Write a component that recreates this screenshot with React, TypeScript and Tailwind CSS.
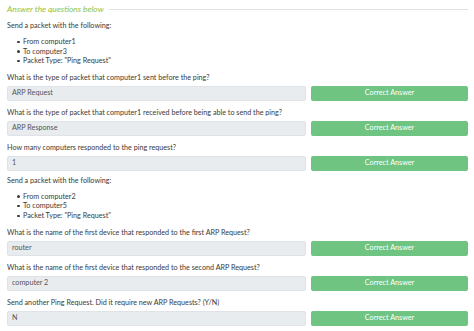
import React from "react";

const font = { fontFamily: '"Lato", "Noto Sans", sans-serif' };

function QA({ q, a, mb = "mb-[7px]" }: { q: string; a: string; mb?: string }) {
  return (
    <div className={"flex flex-col " + mb}>
      <div className="text-[7.2px] leading-[10px] text-[#3a3a3a] mb-[3px] whitespace-nowrap">{q}</div>
      <div className="flex gap-[5px]">
        <div className="w-[299px] h-[15px] rounded-[2px] bg-[#e9ecef] border border-[#dfe3e7] flex items-center pl-[4px] text-[7.2px] text-[#555]">
          {a}
        </div>
        <div className="flex-1 h-[15px] rounded-[2px] bg-[#6ec480] flex items-center justify-center text-[7.2px] text-white">
          Correct Answer
        </div>
      </div>
    </div>
  );
}

function Item({ children }: { children: React.ReactNode }) {
  return (
    <li className="flex items-center h-[9.6px]">
      <span className="w-[2.5px] h-[2.5px] rounded-full bg-[#3a3a3a] ml-[10px] mr-[3.5px]" />
      <span>{children}</span>
    </li>
  );
}

function Packet({ from, to }: { from: string; to: string }) {
  return (
    <div className="flex flex-col mb-[7px]">
      <div className="text-[7.2px] leading-[10px] text-[#3a3a3a] mb-[6px]">Send a packet with the following:</div>
      <ul className="text-[7.2px] leading-[9.6px] text-[#3a3a3a]">
        <Item>From {from}</Item>
        <Item>To {to}</Item>
        <Item>Packet Type: "Ping Request"</Item>
      </ul>
    </div>
  );
}

export default function App() {
  return (
    <div className="w-[474px] h-[331px] bg-white pl-[7px] pr-[6px] pt-[4px] overflow-hidden" style={font}>
      <div className="flex items-center gap-[5px] mb-[6px]">
        <div className="text-[8.4px] italic text-[#8bc34a] leading-[11px] whitespace-nowrap">Answer the questions below</div>
        <div className="flex-1 h-px bg-[#e2e2e2]" />
      </div>
      <Packet from="computer1" to="computer3" />
      <QA q="What is the type of packet that computer1 sent before the ping?" a="ARP Request" />
      <QA q="What is the type of packet that computer1 received before being able to send the ping?" a="ARP Response" />
      <QA q="How many computers responded to the ping request?" a="1" mb="mb-[5px]" />
      <Packet from="computer2" to="computer5" />
      <QA q="What is the name of the first device that responded to the first ARP Request?" a="router" />
      <QA q="What is the name of the first device that responded to the second ARP Request?" a="computer 2" />
      <QA q="Send another Ping Request. Did it require new ARP Requests? (Y/N)" a="N" />
    </div>
  );
}
